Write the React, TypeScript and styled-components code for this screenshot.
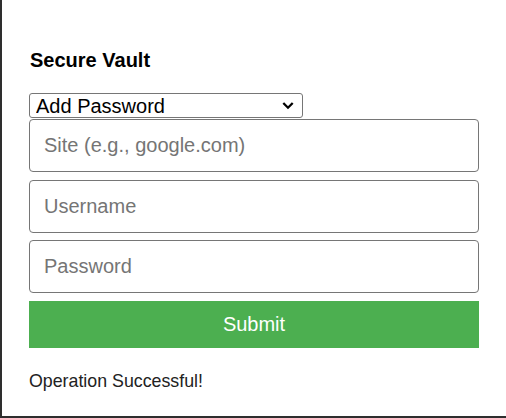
import React, { useState } from 'react'
import styled, { createGlobalStyle } from 'styled-components'

const GlobalStyle = createGlobalStyle`
  html, body {
    margin: 0;
    padding: 0;
    background: #ffffff;
  }
  body {
    font-family: "Liberation Sans", Arial, sans-serif;
    border-left: 2px solid #2e2e2e;
    min-height: 416px;
    border-bottom: 2px solid #2e2e2e;
  }
`

const Popup = styled.div`
  width: 450px;
  padding: 49px 0 0 27px;
  display: flex;
  flex-direction: column;
`

const Title = styled.h3`
  margin: 0 0 21px 1px;
  font-size: 20px;
  line-height: 23px;
  font-weight: bold;
  color: #000;
`

const SelectWrap = styled.div`
  position: relative;
  width: 274px;
  height: 25px;
  margin: 0 0 1px;
`

const ActionSelect = styled.select`
  appearance: none;
  box-sizing: border-box;
  width: 274px;
  height: 25px;
  font-family: "Liberation Sans", Arial, sans-serif;
  font-size: 20px;
  color: #000;
  background: #fff;
  border: 1px solid #767676;
  border-radius: 3px;
  padding: 0 24px 0 6px;
  margin: 0;
`

const Chevron = styled.svg`
  position: absolute;
  right: 9px;
  top: 8px;
  width: 12px;
  height: 9px;
  pointer-events: none;
`

const Field = styled.input`
  box-sizing: border-box;
  width: 450px;
  height: 53px;
  margin: 0 0 7.5px;
  padding: 0 14px;
  font-family: "Liberation Sans", Arial, sans-serif;
  font-size: 20px;
  color: #000;
  border: 1px solid #767676;
  border-radius: 4px;
  outline: none;

  &::placeholder {
    color: #757575;
  }
`

const SubmitButton = styled.button`
  width: 450px;
  height: 47px;
  margin-top: 0;
  border: none;
  background: #4caf50;
  color: #fff;
  font-family: "Liberation Sans", Arial, sans-serif;
  font-size: 20px;
  cursor: pointer;
`

const Status = styled.p`
  margin: 23px 0 0 0;
  font-size: 17.8px;
  line-height: 20px;
  color: #222;
`

export default function App() {
  const [action, setAction] = useState('add')

  return (
    <>
      <GlobalStyle />
      <Popup>
        <Title>Secure Vault</Title>
        <SelectWrap>
          <ActionSelect value={action} onChange={(e) => setAction(e.target.value)}>
            <option value="add">Add Password</option>
            <option value="get">Retrieve Password</option>
          </ActionSelect>
          <Chevron viewBox="0 0 12 9">
            <path d="M1.3 2 L6 6.7 L10.7 2" fill="none" stroke="#000" strokeWidth="2.3" />
          </Chevron>
        </SelectWrap>
        <Field type="text" placeholder="Site (e.g., google.com)" />
        <Field type="text" placeholder="Username" />
        <Field type="password" placeholder="Password" />
        <SubmitButton>Submit</SubmitButton>
        <Status>Operation Successful!</Status>
      </Popup>
    </>
  )
}
